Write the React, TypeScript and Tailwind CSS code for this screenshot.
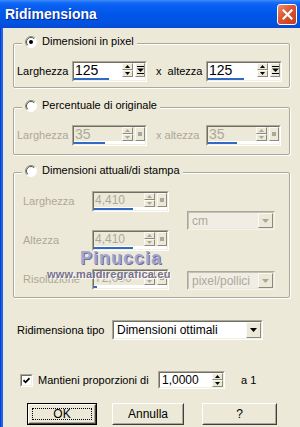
import React from "react";

const raisedSm =
  "flex items-center justify-center bg-[#ece9d8] border border-t-[#fbfaf6] border-l-[#fbfaf6] border-r-[#8c8a7c] border-b-[#8c8a7c]";

function Tri({ up, color, w = 5, h = 3 }: { up?: boolean; color: string; w?: number; h?: number }) {
  return (
    <svg width={w} height={h} viewBox={`0 0 ${w} ${h}`} className="block">
      <path d={up ? `M0 ${h}L${w / 2} 0L${w} ${h}Z` : `M0 0L${w} 0L${w / 2} ${h}Z`} fill={color} />
    </svg>
  );
}

function DropGlyph() {
  return (
    <svg width="7" height="8" viewBox="0 0 7 8" className="block">
      <rect x="0" y="0" width="7" height="1" fill="#000" />
      <path d="M0 2.5L7 2.5L3.5 6Z" fill="#000" />
      <rect x="0" y="7" width="7" height="1" fill="#000" />
    </svg>
  );
}

function SpinField({
  value,
  disabled,
  textW,
  fill,
  square,
  big,
}: {
  value: string;
  disabled?: boolean;
  textW: number;
  fill: number;
  square?: boolean;
  big?: boolean;
}) {
  const arrow = disabled ? "#aca899" : "#000";
  return (
    <div className="border border-t-[#aca899] border-l-[#aca899] border-r-white border-b-white">
      <div
        className={`flex flex-col border border-t-[#716f64] border-l-[#716f64] border-r-[#f1efe2] border-b-[#f1efe2] ${
          disabled ? "bg-[#ece9d8]" : "bg-white"
        }`}
      >
        <div className="flex h-[14px]">
          <div
            className={`${big ? "text-[14px]" : "text-[12px]"} leading-[14px] pl-[1px] overflow-hidden whitespace-nowrap ${
              disabled ? "text-[#aca899]" : "text-black"
            }`}
            style={{ width: textW }}
          >
            {value}
          </div>
          <div className="flex flex-col w-[11px]">
            <div className={`${raisedSm} h-[7px]`}>
              <Tri up color={arrow} />
            </div>
            <div className={`${raisedSm} h-[7px]`}>
              <Tri color={arrow} />
            </div>
          </div>
          <div className="w-[2px]" />
          <div className={`${raisedSm} w-[10px]`}>
            {square ? <span className="block w-[4px] h-[4px] bg-[#aca899]" /> : <DropGlyph />}
          </div>
        </div>
        <div className="flex h-[3px] bg-white">
          <div className="h-[2px] mt-[1px] bg-[#316ac5]" style={{ width: fill }} />
        </div>
      </div>
    </div>
  );
}

function Dropdown({ text, disabled, w, h }: { text: string; disabled?: boolean; w: number; h: number }) {
  return (
    <div
      className={`flex border ${
        disabled
          ? "border-t-[#aca899] border-l-[#aca899] border-r-[#f4f3ee] border-b-[#f4f3ee]"
          : "border-t-[#aca899] border-l-[#aca899] border-r-white border-b-white"
      }`}
      style={{ width: w, height: h }}
    >
      <div
        className={`flex flex-1 border ${
          disabled
            ? "border-t-[#c4c1b0] border-l-[#c4c1b0] border-r-[#ece9d8] border-b-[#ece9d8] bg-[#f0eee4]"
            : "border-t-[#716f64] border-l-[#716f64] border-r-[#f1efe2] border-b-[#f1efe2] bg-white"
        }`}
      >
        <div
          className={`flex-1 pl-[3px] flex items-center text-[12px] whitespace-nowrap ${
            disabled ? "text-[#aca899]" : "text-black"
          }`}
        >
          {text}
        </div>
        <div className={`${raisedSm} w-[15px]`}>
          <Tri color={disabled ? "#aca899" : "#000"} w={7} h={4} />
        </div>
      </div>
    </div>
  );
}

function Radio({ checked }: { checked?: boolean }) {
  return (
    <svg width="12" height="12" viewBox="0 0 12 12" className="block shrink-0">
      <circle cx="6" cy="6" r="5.5" fill="#fff" />
      <path d="M2.1 9.9A5.5 5.5 0 0 1 9.9 2.1" stroke="#8e8c7e" strokeWidth="1" fill="none" />
      <path d="M2.8 9.2A4.5 4.5 0 0 1 9.2 2.8" stroke="#56554c" strokeWidth="1" fill="none" />
      <path d="M9.9 2.1A5.5 5.5 0 0 1 2.1 9.9" stroke="#fff" strokeWidth="1" fill="none" />
      {checked && <circle cx="6" cy="6" r="2" fill="#000" />}
    </svg>
  );
}

function Legend({ label, checked }: { label: string; checked?: boolean }) {
  return (
    <legend className="ml-[8px] px-[3px] bg-[#ece9d8]">
      <span className="inline-flex items-center gap-[5px] h-[13px] text-[11px] leading-[13px] text-black">
        <Radio checked={checked} />
        {label}
      </span>
    </legend>
  );
}

const fieldsetCls =
  "w-[277px] border border-[#aca899] rounded-[2px] shadow-[inset_1px_1px_0_#fff,1px_1px_0_#fff]";

function Button({ children, w, isDefault }: { children: React.ReactNode; w: number; isDefault?: boolean }) {
  return (
    <div
      className={`h-[22px] ${isDefault ? "border border-black" : ""}`}
      style={{ width: w }}
    >
      <div className="h-full border border-t-white border-l-white border-r-[#404040] border-b-[#404040] bg-[#ece9d8]">
        <div className="h-full border border-t-[#ece9d8] border-l-[#ece9d8] border-r-[#aca899] border-b-[#aca899] flex items-center justify-center p-[2px]">
          <div
            className={`w-full h-full flex items-center justify-center text-[12px] text-black ${
              isDefault ? "border border-dotted border-black" : ""
            }`}
          >
            {children}
          </div>
        </div>
      </div>
    </div>
  );
}

export default function App() {
  return (
    <div className="relative w-[300px] h-[427px] overflow-hidden bg-[#ece9d8] flex flex-col font-['Liberation_Sans',Arial,sans-serif] text-[11px] text-black">
      {/* Title bar */}
      <div className="h-[28px] shrink-0 flex items-center justify-between pl-[5px] pr-[3px] bg-[linear-gradient(to_bottom,#3d8ff8_0%,#1a6ef7_8%,#0860f2_20%,#0056e8_50%,#0054e3_80%,#0a48cf_100%)]">
        <span className="text-white font-bold text-[14px] [text-shadow:1px_1px_0_#0a248a]">Ridimensiona</span>
        <div className="w-[20px] h-[21px] rounded-[3px] border border-white bg-[linear-gradient(135deg,#eb8f73_0%,#dc5430_45%,#c33c1c_100%)] flex items-center justify-center">
          <svg width="11" height="11" viewBox="0 0 11 11" className="block">
            <path d="M1.5 1.5L9.5 9.5M9.5 1.5L1.5 9.5" stroke="white" strokeWidth="2.2" strokeLinecap="square" />
          </svg>
        </div>
      </div>

      <div className="flex flex-1">
        <div className="w-[1px] bg-[#0a3fc8]" />
        <div className="w-[2px] bg-[#1b63ec]" />
        <div className="flex-1 flex flex-col pl-[10px]">
          {/* Group 1 */}
          <fieldset className={`${fieldsetCls} mt-[7px] pt-[9px] pb-[5px]`}>
            <Legend label="Dimensioni in pixel" checked />
            <div className="flex items-center h-[21px]">
              <span className="pl-[3px] w-[58px]">Larghezza</span>
              <SpinField value="125" textW={48} fill={35} big />
              <span className="ml-[9px] w-[50px]">x&nbsp; altezza</span>
              <SpinField value="125" textW={49} fill={36} big />
            </div>
          </fieldset>

          {/* Group 2 */}
          <fieldset className={`${fieldsetCls} mt-[11px] pt-[9px] pb-[8px]`}>
            <Legend label="Percentuale di originale" />
            <div className="flex items-center h-[21px] text-[#aca899]">
              <span className="pl-[3px] w-[58px]">Larghezza</span>
              <SpinField value="35" textW={48} fill={31} square disabled big />
              <span className="ml-[9px] w-[50px]">x altezza</span>
              <SpinField value="35" textW={48} fill={29} square disabled big />
            </div>
          </fieldset>

          {/* Group 3 */}
          <fieldset className={`${fieldsetCls} mt-[9px] pt-[10px] pb-[7px]`}>
            <Legend label="Dimensioni attuali/di stampa" />
            <div className="flex text-[#aca899]">
              <div className="flex flex-col gap-[18px]">
                <div className="flex items-center h-[21px]">
                  <span className="pl-[9px] w-[78px]">Larghezza</span>
                  <SpinField value="4,410" textW={50} fill={39} square disabled />
                </div>
                <div className="flex items-center h-[21px]">
                  <span className="pl-[9px] w-[78px]">Altezza</span>
                  <SpinField value="4,410" textW={50} fill={39} square disabled />
                </div>
                <div className="flex items-center h-[21px]">
                  <span className="pl-[9px] w-[78px]">Risoluzione</span>
                  <SpinField value="72,000" textW={50} fill={3} square disabled />
                </div>
              </div>
              <div className="flex flex-col ml-[18px]">
                <div className="mt-[20px]">
                  <Dropdown text="cm" disabled w={88} h={19} />
                </div>
                <div className="mt-[41px]">
                  <Dropdown text="pixel/pollici" disabled w={88} h={19} />
                </div>
              </div>
            </div>
          </fieldset>

          {/* Ridimensiona tipo */}
          <div className="flex items-center mt-[22px] h-[20px] pl-[4px]">
            <span className="w-[95px]">Ridimensiona tipo</span>
            <Dropdown text="Dimensioni ottimali" w={151} h={20} />
          </div>

          {/* Mantieni proporzioni */}
          <div className="flex items-center mt-[31px] h-[18px] pl-[7px]">
            <div className="w-[13px] h-[13px] border border-t-[#aca899] border-l-[#aca899] border-r-white border-b-white">
              <div className="w-full h-full border border-t-[#716f64] border-l-[#716f64] border-r-[#f1efe2] border-b-[#f1efe2] bg-white flex items-center justify-center">
                <svg width="7" height="7" viewBox="0 0 7 7" className="block">
                  <path d="M0.5 3.2L2.6 5.3L6.5 1.2" stroke="#000" strokeWidth="1.8" fill="none" />
                </svg>
              </div>
            </div>
            <span className="ml-[5px] w-[120px]">Mantieni proporzioni di</span>
            <div className="w-[67px] h-[18px] border border-t-[#aca899] border-l-[#aca899] border-r-white border-b-white">
              <div className="flex h-full border border-t-[#716f64] border-l-[#716f64] border-r-[#f1efe2] border-b-[#f1efe2] bg-white">
                <div className="flex-1 text-[12px] leading-[14px] pl-[2px]">1,0000</div>
                <div className="flex flex-col w-[11px]">
                  <div className={`${raisedSm} h-[7px]`}>
                    <Tri up color="#000" />
                  </div>
                  <div className={`${raisedSm} h-[7px]`}>
                    <Tri color="#000" />
                  </div>
                </div>
              </div>
            </div>
            <span className="ml-[16px]">a 1</span>
          </div>

          {/* Buttons */}
          <div className="flex items-center mt-[14px] pl-[14px]">
            <Button w={70} isDefault>
              OK
            </Button>
            <div className="ml-[15px]">
              <Button w={72}>Annulla</Button>
            </div>
            <div className="ml-[18px]">
              <Button w={75}>?</Button>
            </div>
          </div>
        </div>
      </div>

      {/* Watermark */}
      <div className="absolute left-[80px] top-[245px] text-[18px] font-bold tracking-[1px] text-[#a3a5cf] [text-shadow:1px_1px_0_#6d6f99] pointer-events-none">
        Pinuccia
      </div>
      <div className="absolute left-[47px] top-[266px] text-[11px] font-bold tracking-[0.2px] text-[#77728e] [text-shadow:1px_1px_0_#fff] pointer-events-none">
        www.maidiregrafica.eu
      </div>
    </div>
  );
}
